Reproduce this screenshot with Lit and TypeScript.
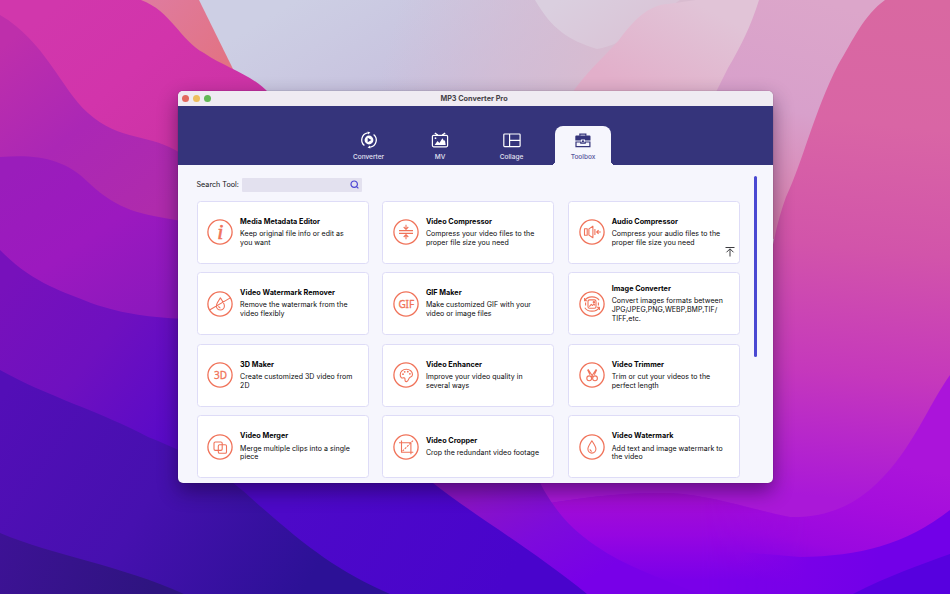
import { LitElement, html, svg, css } from "lit";
import { customElement, property } from "lit/decorators.js";

type Glyph = ReturnType<typeof svg>;

const toolGlyphs: Record<string, Glyph> = {
  info: svg`<text class="serif" x="13.3" y="20.4" text-anchor="middle">i</text>`,
  compress: svg`<path d="M6 11.6h14M6 14.4h14M13 5.8v4.4M10.7 8l2.3 2.3L15.3 8M13 20.2v-4.4M10.7 18l2.3-2.3 2.3 2.3"/>`,
  audio: svg`<path d="M5.5 9.8h2.7v6.5H5.5zM9.9 9.9l4-2.7v11.6l-4-2.7zM15.9 10v6M17.6 13h4.2M19.6 11.2L17.7 13l1.9 1.8"/>`,
  remover: svg`<path d="M13.4 6.9c-1.4 2.4-4 5.4-4 8.1a4 4 0 0 0 8 0c0-2.7-2.6-5.7-4-8.1zM3 18.7L23.7 6.6M11.6 15.2c.2 1 .8 1.6 1.8 1.8"/>`,
  gif: svg`<text class="word" x="13.2" y="16.6" text-anchor="middle">GIF</text>`,
  convert: svg`<rect x="9" y="8.9" width="8" height="8.4" rx="1.5"/><path d="M10.3 15.6l2-2.3 1.3 1.2 1.3-1.4 1.2 1.3"/><circle cx="14.9" cy="11.2" r=".7"/><path d="M5.8 9.6C8.5 4.9 17 4.5 20.2 9.3M20.2 16.4C17.5 21.1 9 21.5 5.8 16.7M5.6 7v2.7h2.6M20.4 19v-2.7h-2.6M6.6 11.5v3M19.4 11.5v3"/>`,
  three: svg`<text class="word" x="13.5" y="16.6" text-anchor="middle">3D</text>`,
  palette: svg`<path d="M13.3 7.2c-3.6 0-6.1 2.5-6.1 5.5 0 2.3 1.3 3.5 2.9 3.2 1.300-.3 2 .2 1.900 1.500-.1 1.500.4 2.400 1.600 2.200 2-.4 1.700-2.600 2.800-3.800 1.100-1.100 3.100-.9 3.100-3.300 0-3-2.700-5.300-6.200-5.300z"/><g class="solid"><circle cx="10" cy="12.2" r=".9"/><circle cx="11.7" cy="9.8" r=".9"/><circle cx="14.8" cy="9.7" r=".9"/><circle cx="16.9" cy="11.8" r=".9"/></g>`,
  trim: svg`<path d="M9 7.2l5.3 8.1M17.3 7.2L12 15.3M8.600 7.700l2.400 5M17.700 7.700l-2.400 5"/><circle cx="10.2" cy="16.3" r="2.4"/><circle cx="16" cy="16.3" r="2.4"/>`,
  merge: svg`<rect x="7" y="8" width="8.2" height="8.4" rx="1.3"/><rect x="11.3" y="10.8" width="8.2" height="8.4" rx="1.3"/>`,
  crop: svg`<path d="M8.5 6.5v11.7h11.8M6 8.8h11.9v11.4"/><path class="dash" d="M9.5 17.1L20 6.6"/>`,
  drop: svg`<path d="M12.9 6.8c-1.4 2.4-4 5.6-4 8.3a4 4 0 0 0 8 0c0-2.7-2.6-5.9-4-8.3zM11 15.3c.1 1.1.7 1.9 1.8 2.1"/>`,
};

interface Tool {
  icon: string;
  name: string;
  text: string;
  top?: boolean;
}

const tools: Tool[] = [
  { icon: "info", name: "Media Metadata Editor", text: "Keep original file info or edit as\nyou want" },
  { icon: "compress", name: "Video Compressor", text: "Compress your video files to the\nproper file size you need" },
  { icon: "audio", name: "Audio Compressor", text: "Compress your audio files to the\nproper file size you need", top: true },
  { icon: "remover", name: "Video Watermark Remover", text: "Remove the watermark from the\nvideo flexibly" },
  { icon: "gif", name: "GIF Maker", text: "Make customized GIF with your\nvideo or image files" },
  { icon: "convert", name: "Image Converter", text: "Convert images formats between\nJPG/JPEG,PNG,WEBP,BMP,TIF/\nTIFF,etc." },
  { icon: "three", name: "3D Maker", text: "Create customized 3D video from\n2D" },
  { icon: "palette", name: "Video Enhancer", text: "Improve your video quality in\nseveral ways" },
  { icon: "trim", name: "Video Trimmer", text: "Trim or cut your videos to the\nperfect length" },
  { icon: "merge", name: "Video Merger", text: "Merge multiple clips into a single\npiece" },
  { icon: "crop", name: "Video Cropper", text: "Crop the redundant video footage" },
  { icon: "drop", name: "Video Watermark", text: "Add text and image watermark to\nthe video" },
];

const tabs: { name: string; icon: Glyph }[] = [
  {
    name: "Converter",
    icon: svg`<circle class="fill" cx="10" cy="9" r="4.4"/><path class="cut" d="M8.7 6.7v4.6l3.7-2.3z"/><path d="M8.8 1.900A7.200 7.200 0 0 0 5.400 14.600M11.200 16.100A7.200 7.200 0 0 0 14.600 3.400" stroke-width="1.3"/><path class="fill" d="M8.6 .6l2.8 1-2.4 1.8zM11.4 17.4l-2.8-1 2.4-1.8z"/>`,
  },
  {
    name: "MV",
    icon: svg`<rect x="2.4" y="4.3" width="15.2" height="11.5" rx="1.2" stroke-width="1.2"/><path d="M4.800 2l3 2.100M15.200 2l-3 2.100" stroke-width="1.4"/><path class="fill" d="M4.600 14l2.900-4 1.900 2 3-4.700 1.700 2.600.8-.8.8 4.900z"/><circle class="fill" cx="5.5" cy="7.2" r=".9"/>`,
  },
  {
    name: "Collage",
    icon: svg`<rect x="1.8" y="3" width="16.3" height="12.6" rx=".8" stroke-width="1.2"/><path d="M7.6 3v12.6M7.6 9.3h10.5" stroke-width="1.2"/>`,
  },
  {
    name: "Toolbox",
    icon: svg`<path d="M6.9 4.7V3.2h5.9v1.5" stroke-width="1.3"/><path class="fill" d="M3.3 4.4h13.2q1 0 1 1v4h-5.5v-1H7.9v1H2.3V5.4q0-1 1-1z"/><path d="M3 11v4.6h13.9V11h-4.7v1.2H7.8V11z" stroke-width="1.2"/><rect class="fill" x="9" y="9.4" width="1.9" height="1.8"/>`,
  },
];

@customElement("desktop-wallpaper")
export class DesktopWallpaper extends LitElement {
  static styles = css`
    :host { display: block; }
    svg { display: block; width: 100%; height: 100%; }
  `;

  render() {
    const grad = (id: string, v: number[], stops: string[]) => svg`
      <linearGradient id=${id} gradientUnits="userSpaceOnUse" x1=${v[0]} y1=${v[1]} x2=${v[2]} y2=${v[3]}>
        ${stops.map((c, i) => svg`<stop offset=${i / (stops.length - 1)} stop-color=${c}></stop>`)}
      </linearGradient>`;
    return html`<svg viewBox="0 0 950 594" preserveAspectRatio="none">
      <defs>
        ${grad("sky", [330, -20, 450, 180], ["#cdcfe4", "#c8c3df", "#c3b6d8"])}
        ${grad("haze", [400, 0, 620, 60], ["#d8bdd200", "#d8bdd299", "#d9bcd0"])}
        ${grad("mist", [560, 0, 600, 55], ["#dacfdf", "#dac6d8"])}
        ${grad("blush", [690, 0, 640, 95], ["#e1c4d7", "#e2afca"])}
        ${grad("orchid", [820, 0, 760, 220], ["#dca6ca", "#d8a0cb", "#da7fae"])}
        ${grad("rose", [900, 0, 850, 500], ["#d968a1", "#d965a5", "#d254aa", "#c538bc", "#aa18d8"])}
        ${grad("coral", [150, 0, 225, 60], ["#df7b9e", "#e27384"])}
        ${grad("magenta", [60, 0, 190, 150], ["#d137ac", "#d234ab", "#cc33a5"])}
        ${grad("plum", [10, 40, 150, 215], ["#be2fab", "#ab27b5", "#af2bac"])}
        ${grad("violet", [30, 158, 140, 320], ["#9a1dbb", "#9c19bf", "#8c18bd"])}
        ${grad("grape", [0, 290, 177, 430], ["#7711bb", "#6e10bf", "#590ac8"])}
        ${grad("indigo", [0, 400, 300, 594], ["#530eb7", "#4610af", "#2c1196"])}
        ${grad("ink", [0, 540, 150, 594], ["#3d1295", "#2e1480"])}
        ${grad("blue", [300, 483, 500, 594], ["#4d09c8", "#4904cc"])}
        ${grad("purple", [500, 480, 560, 594], ["#8a14c4", "#7d0bdb", "#7800e8"])}
        ${grad("neon", [880, 460, 850, 600], ["#ab14da", "#a50ddd", "#9a08e0", "#7a00e9"])}
        ${grad("surge", [650, 490, 650, 580], ["#a50fd0", "#9606e1", "#7a00e9"])}
        ${grad("veil", [700, 0, 810, 0], ["#fff", "#000"])}
        ${grad("iris", [740, 540, 880, 560], ["#7a00e900", "#7900e9", "#7200e8"])}
        <mask id="left" maskUnits="userSpaceOnUse" x="500" y="460" width="450" height="140">
          <rect x="500" y="460" width="450" height="140" fill="url(#veil)"/>
        </mask>
      </defs>
      <path fill="url(#sky)" d="M0 0H950V594H0z"/>
      <path fill="url(#haze)" d="M0 0H950V594H0z"/>
      <path fill="url(#mist)" d="M535 0C552 29 568 40 597 49C625 45 650 20 680 0z"/>
      <path fill="url(#blush)" d="M570 96C585 73 604 57 619 40C633 21 648 5 668 4L696 0H770L720 100z"/>
      <path fill="url(#orchid)" d="M759 0C751 26 740 48 728 68L714 96L770 240L900 200V0z"/>
      <path fill="url(#rose)" d="M885 0C864 15 853 40 838 65C814 112 802 164 786 197C777 222 770 250 760 330V440H530V594H950V0z"/>
      <path fill="url(#neon)" d="M530 506C580 498 620 492 670 493C715 496 745 508 790 517C840 518 870 495 896 462C920 431 932 400 950 375V594H530z"/>
      <path fill="url(#surge)" mask="url(#left)" d="M530 506C580 498 620 492 670 493C715 496 745 508 790 517L850 520V594H530z"/>
      <path fill="url(#iris)" d="M950 510C905 545 860 556 800 557L740 552V594H950z"/>
      <path fill="#5700df" d="M853 594C890 575 920 565 950 554V594z"/>
      <path fill="url(#purple)" d="M420 470H534C548 502 566 526 596 546C625 566 660 578 700 594H420z"/>
      <path fill="url(#blue)" d="M200 460H405L433 483C475 516 530 548 587 594H200z"/>
      <path fill="url(#coral)" d="M130 0H199L234 71L233 84z"/>
      <path fill="url(#magenta)" d="M0 0H141C171 11 180 40 204 53C226 68 251 74 269 93V200H0z"/>
      <path fill="url(#plum)" d="M0 15C45 41 61 89 88 113C120 142 151 133 182 154V240H0z"/>
      <path fill="url(#violet)" d="M0 157C35 154 65 158 89 183C119 211 140 214 182 221V350H0z"/>
      <path fill="url(#grape)" d="M0 250C32 283 64 292 91 303C126 315 151 317 182 319V460H0z"/>
      <path fill="url(#indigo)" d="M0 370C44 395 104 413 148 437C200 457 232 480 251 498C303 544 335 570 390 594H0z"/>
      <path fill="url(#ink)" d="M0 533C55 556 120 565 184 594H0z"/>
    </svg>`;
  }
}

@customElement("tool-card")
export class ToolCard extends LitElement {
  @property({ attribute: false }) tool!: Tool;

  static styles = css`
    :host {
      box-sizing: border-box;
      display: flex;
      align-items: center;
      gap: 6.8px;
      padding-left: 9.8px;
      border: 1px solid #dedcf7;
      border-radius: 3.5px;
      background: #fff;
      position: relative;
    }
    .icon {
      flex: none;
      width: 26px;
      height: 26px;
      fill: none;
      stroke: #f0735a;
      stroke-width: 1.1;
      stroke-linejoin: round;
    }
    .ring { stroke-width: 1.3; }
    .solid, .serif, .word { fill: #f0735a; stroke: none; }
    .serif { font: italic 22px "Liberation Serif", serif; stroke: #f0735a; stroke-width: .6; }
    .word { font: 10px "Noto Sans", sans-serif; letter-spacing: -.1px; stroke: #f0735a; stroke-width: .3; }
    .dash { stroke-dasharray: 2.2 1; }
    .copy { display: flex; flex-direction: column; gap: 4.2px; }
    .name { font-weight: 700; font-size: 7.25px; line-height: 9px; color: #050507; white-space: nowrap; }
    .text { font-size: 7px; line-height: 8.8px; color: #08080a; white-space: pre; letter-spacing: .04px; }
    .top { position: absolute; right: 4px; bottom: 5.5px; width: 10px; height: 11px; fill: none; stroke: #3c3c40; stroke-width: 1; }
  `;

  render() {
    const t = this.tool;
    return html`
      <svg class="icon" viewBox="0 0 26 26">
        <circle class="ring" cx="13" cy="13" r="12.1"/>
        ${toolGlyphs[t.icon]}
      </svg>
      <div class="copy">
        <div class="name">${t.name}</div>
        <div class="text">${t.text}</div>
      </div>
      ${t.top ? html`<svg class="top" viewBox="0 0 10 11"><path d="M.5 1.5h9M5 10.5V3M1.5 6.3L5 2.8 8.5 6.3"/></svg>` : null}
    `;
  }
}

@customElement("app-root")
export class AppRoot extends LitElement {
  static styles = css`
    :host {
      display: grid;
      justify-items: start;
      align-items: start;
      width: 950px;
      height: 594px;
      overflow: hidden;
      font-family: Inter, "Liberation Sans", sans-serif;
    }
    .wallpaper { grid-area: 1 / 1; width: 950px; height: 594px; }
    .window {
      grid-area: 1 / 1;
      z-index: 1;
      width: 595px;
      height: 392px;
      margin: 91px 0 0 178px;
      border-radius: 5px;
      overflow: hidden;
      background: #f6f6fd;
      display: flex;
      flex-direction: column;
      box-shadow: 0 0 1px rgba(0, 0, 0, .5), 0 8px 20px rgba(20, 0, 40, .48);
    }
    .titlebar {
      flex: none;
      height: 15px;
      background: #efebf2;
      display: grid;
      grid-template-columns: 1fr auto 1fr;
      align-items: center;
      padding-right: 3px;
    }
    .lights { display: flex; gap: 4px; padding-left: 4px; }
    .light { width: 7px; height: 7px; border-radius: 50%; }
    .close { background: #e2695f; }
    .minimize { background: #edbd5e; }
    .zoom { background: #62b856; }
    .title { font-size: 7.25px; font-weight: 700; color: #454348; line-height: 15px; }
    .header {
      flex: none;
      height: 59px;
      box-sizing: border-box;
      background: #35347b;
      padding-left: 162.5px;
      display: flex;
      align-items: flex-end;
      gap: 15.5px;
    }
    .tab {
      position: relative;
      box-sizing: border-box;
      width: 56px;
      height: 39px;
      padding-top: 5px;
      display: flex;
      flex-direction: column;
      align-items: center;
      gap: 3.5px;
      color: #fff;
      --under: #35347b;
    }
    .tab svg { width: 20px; height: 18px; fill: none; stroke: currentColor; }
    .tab .fill { fill: currentColor; stroke: none; }
    .tab .cut { fill: var(--under); stroke: none; }
    .label { font-size: 6.5px; font-weight: 500; line-height: 9px; color: #e4e3f2; }
    .active { background: #f6f6fd; color: #35347b; border-radius: 8px 8px 0 0; }
    .active .label { color: #55549a; }
    .active::before, .active::after {
      content: "";
      position: absolute;
      bottom: 0;
      width: 3px;
      height: 5px;
    }
    .active::before { left: -3px; background: radial-gradient(ellipse 3px 5px at 0 0, transparent 97%, #f6f6fd); }
    .active::after { right: -3px; background: radial-gradient(ellipse 3px 5px at 100% 0, transparent 97%, #f6f6fd); }
    .body { flex: 1; min-height: 0; display: flex; padding: 11px 0 0 18.5px; }
    .main { width: 544px; }
    .search { display: flex; align-items: center; gap: 3.5px; height: 15px; padding-top: 1px; font-size: 7.2px; color: #101014; }
    .caption { width: 42px; white-space: nowrap; }
    .field {
      box-sizing: border-box;
      width: 120px;
      height: 14px;
      border-radius: 1px;
      background: #e3e1ef;
      display: flex;
      align-items: center;
      justify-content: flex-end;
      padding-right: 3px;
    }
    .field svg { width: 9px; height: 9px; fill: none; stroke: #4b45d3; stroke-width: 1.2; }
    .grid {
      margin-top: 8.5px;
      display: grid;
      grid-template-columns: repeat(3, 172px);
      grid-auto-rows: 63px;
      gap: 8.6px 13.8px;
    }
    .scroll { width: 3px; height: 181px; margin-left: 13px; border-radius: 1.5px; background: #4a49d2; }
  `;

  render() {
    return html`
      <desktop-wallpaper class="wallpaper"></desktop-wallpaper>
      <div class="window">
        <div class="titlebar">
          <div class="lights">
            <span class="light close"></span><span class="light minimize"></span><span class="light zoom"></span>
          </div>
          <div class="title">MP3 Converter Pro</div>
        </div>
        <nav class="header">
          ${tabs.map((t) => html`
            <div class="tab ${t.name === "Toolbox" ? "active" : ""}">
              <svg viewBox="0 0 20 18">${t.icon}</svg>
              <span class="label">${t.name}</span>
            </div>`)}
        </nav>
        <div class="body">
          <div class="main">
            <div class="search">
              <span class="caption">Search Tool:</span>
              <div class="field">
                <svg viewBox="0 0 9 9"><circle cx="4.2" cy="4.2" r="3.2"/><path d="M6.3 6.3L8.4 8.4"/></svg>
              </div>
            </div>
            <div class="grid">
              ${tools.map((t) => html`<tool-card .tool=${t}></tool-card>`)}
            </div>
          </div>
          <div class="scroll"></div>
        </div>
      </div>
    `;
  }
}
